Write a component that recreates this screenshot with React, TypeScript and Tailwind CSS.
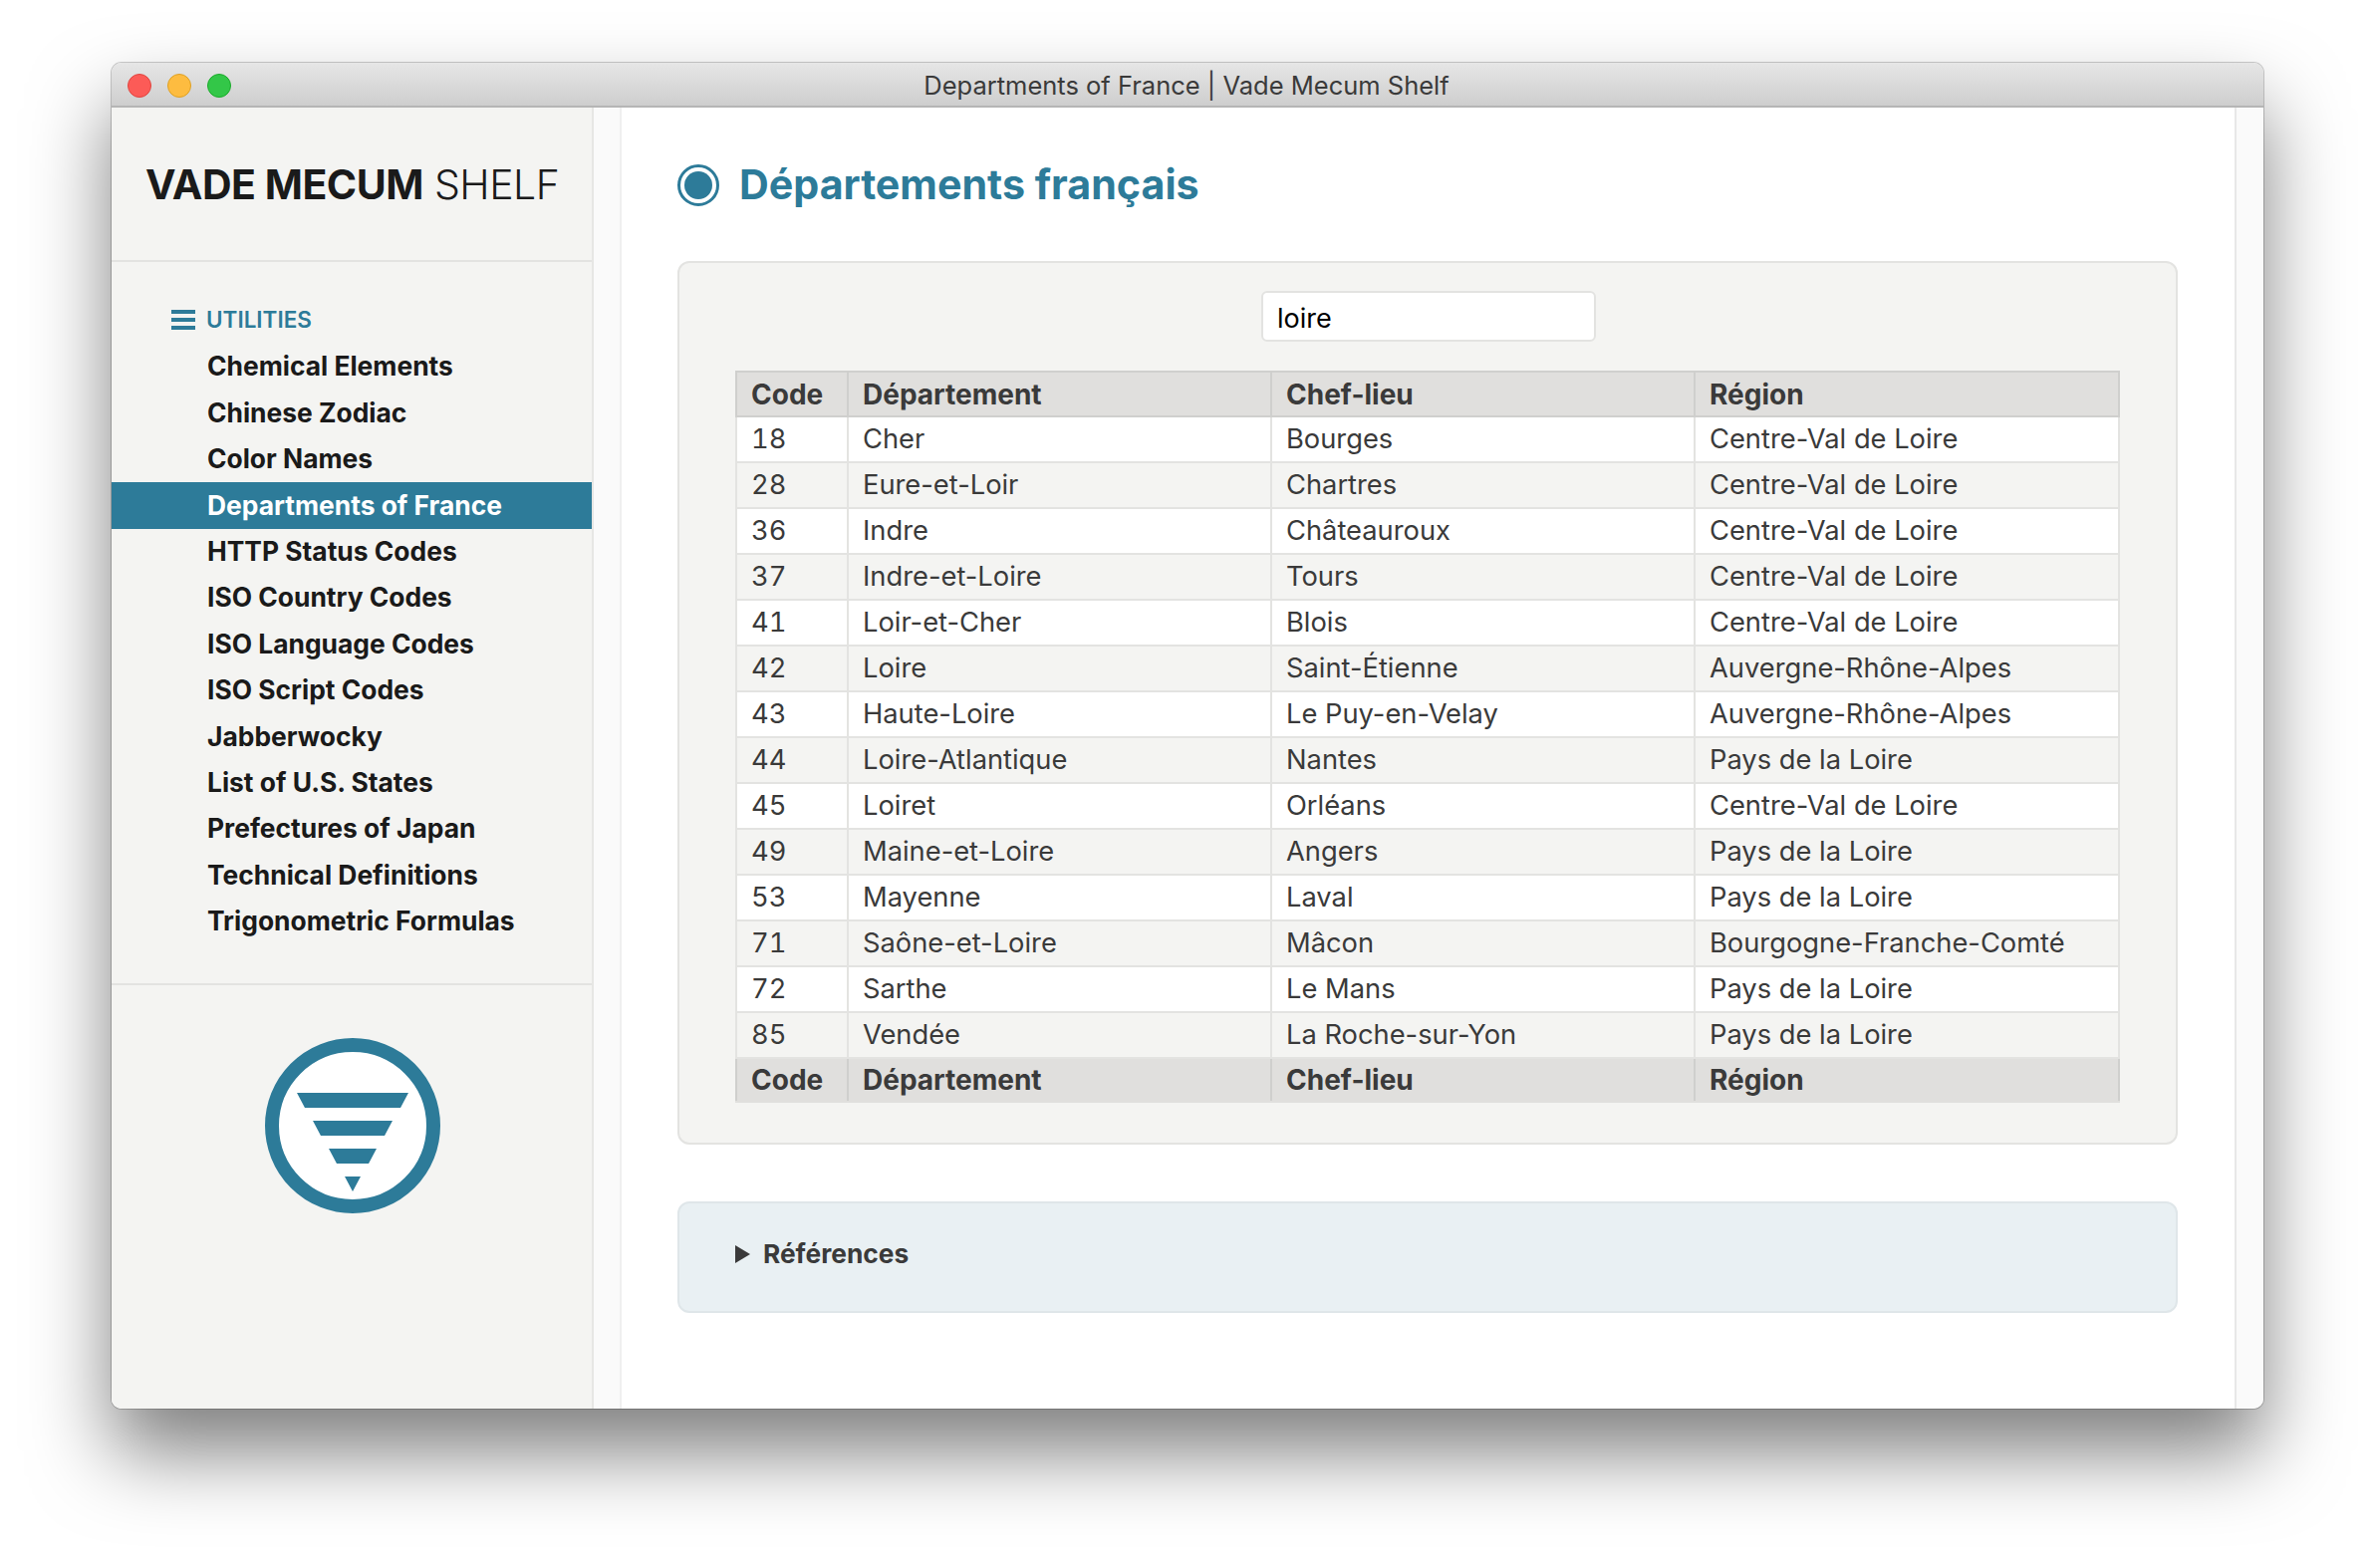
import React from 'react';

const utilities = [
  'Chemical Elements',
  'Chinese Zodiac',
  'Color Names',
  'Departments of France',
  'HTTP Status Codes',
  'ISO Country Codes',
  'ISO Language Codes',
  'ISO Script Codes',
  'Jabberwocky',
  'List of U.S. States',
  'Prefectures of Japan',
  'Technical Definitions',
  'Trigonometric Formulas',
];

const rows = [
  ['18', 'Cher', 'Bourges', 'Centre-Val de Loire'],
  ['28', 'Eure-et-Loir', 'Chartres', 'Centre-Val de Loire'],
  ['36', 'Indre', 'Châteauroux', 'Centre-Val de Loire'],
  ['37', 'Indre-et-Loire', 'Tours', 'Centre-Val de Loire'],
  ['41', 'Loir-et-Cher', 'Blois', 'Centre-Val de Loire'],
  ['42', 'Loire', 'Saint-Étienne', 'Auvergne-Rhône-Alpes'],
  ['43', 'Haute-Loire', 'Le Puy-en-Velay', 'Auvergne-Rhône-Alpes'],
  ['44', 'Loire-Atlantique', 'Nantes', 'Pays de la Loire'],
  ['45', 'Loiret', 'Orléans', 'Centre-Val de Loire'],
  ['49', 'Maine-et-Loire', 'Angers', 'Pays de la Loire'],
  ['53', 'Mayenne', 'Laval', 'Pays de la Loire'],
  ['71', 'Saône-et-Loire', 'Mâcon', 'Bourgogne-Franche-Comté'],
  ['72', 'Sarthe', 'Le Mans', 'Pays de la Loire'],
  ['85', 'Vendée', 'La Roche-sur-Yon', 'Pays de la Loire'],
];

const headers = ['Code', 'Département', 'Chef-lieu', 'Région'];

const Logo = () => (
  <svg width="176" height="176" viewBox="0 0 176 176">
    <circle cx="88" cy="88" r="81" fill="#fff" stroke="#2d7b99" strokeWidth="14" />
    <polygon points="32,55 144,55 136,70 40,70" fill="#2d7b99" />
    <polygon points="48,83 128,83 120,98 56,98" fill="#2d7b99" />
    <polygon points="64,111 112,111 104,126 72,126" fill="#2d7b99" />
    <polygon points="80,139 96,139 88,154" fill="#2d7b99" />
  </svg>
);

const HeaderRow = ({ foot }: { foot?: boolean }) => (
  <tr className={foot ? 'h-[44px] bg-[#e0dfdd] text-[28px] leading-[40px]' : 'h-[45px] bg-[#e0dfdd] text-[28px] leading-[40px]'}>
    {headers.map((h) => (
      <th
        key={h}
        className={
          foot
            ? 'border-2 border-b-[#e0dfdd] border-[#cfcfcd] px-[14px] text-left font-bold'
            : 'border-2 border-[#cfcfcd] px-[14px] text-left font-bold'
        }
      >
        {h}
      </th>
    ))}
  </tr>
);

export default function App() {
  return (
    <div className="h-[1574px] w-[2384px] overflow-hidden bg-white pl-[112px] pt-[63px] font-['Inter',sans-serif]">
      <div className="flex h-[1351px] w-[2160px] flex-col overflow-hidden rounded-[10px] shadow-[0_0_0_1px_rgba(0,0,0,0.2),0_44px_80px_rgba(0,0,0,0.5)]">
        {/* Title bar */}
        <div className="relative flex h-[45px] shrink-0 items-center justify-center border-b-2 border-[#b5b5b5] bg-gradient-to-b from-[#e6e6e6] to-[#cecece] pr-[2px] pt-[4px]">
          <div className="absolute left-[16px] top-[11px] flex gap-4">
            <span className="h-6 w-6 rounded-full border border-[#e0443e] bg-[#fc5b57]" />
            <span className="h-6 w-6 rounded-full border border-[#dea123] bg-[#fdbc40]" />
            <span className="h-6 w-6 rounded-full border border-[#1aab29] bg-[#33c748]" />
          </div>
          <span className="text-[25.5px] text-[#3a3a3a]">Departments of France | Vade Mecum Shelf</span>
        </div>

        <div className="flex min-h-0 flex-1 bg-[#fafafa]">
          {/* Sidebar */}
          <aside className="flex w-[484px] shrink-0 flex-col border-r-2 border-[#e6e6e4] bg-[#f4f4f2]">
            <div className="flex h-[155px] shrink-0 items-start border-b-2 border-[#e3e3e1] pl-[34px] pt-[52px]">
              <div className="text-[41px] leading-[50px] tracking-[-0.5px] text-[#1a1a1a]">
                <span className="font-bold">VADE MECUM</span> <span className="font-light">SHELF</span>
              </div>
            </div>
            <nav className="h-[726px] shrink-0 border-b-2 border-[#e3e3e1] pt-[34px]">
              <div className="flex h-[48px] items-center pl-[60px] text-[22.5px] font-semibold text-[#2d7b99]">
                <span className="flex h-[20px] w-[24px] flex-col justify-between">
                  <span className="h-1 bg-[#2d7b99]" />
                  <span className="h-1 bg-[#2d7b99]" />
                  <span className="h-1 bg-[#2d7b99]" />
                </span>
                <span className="ml-[11px]">UTILITIES</span>
              </div>
              {utilities.map((name) => (
                <div
                  key={name}
                  className={
                    name === 'Departments of France'
                      ? 'flex h-[46.4px] items-center bg-[#2d7b99] pl-[96px] text-[26.4px] font-bold text-white'
                      : 'flex h-[46.4px] items-center pl-[96px] text-[26.4px] font-bold text-[#1a1a1a]'
                  }
                >
                  {name}
                </div>
              ))}
            </nav>
            <div className="flex justify-center pl-[2px] pt-[53px]">
              <Logo />
            </div>
          </aside>

          {/* Main */}
          <main className="ml-[26px] flex-1 border-x-2 border-[#e8e8e8] border-l-[#efefef] bg-white pl-[56px] pr-[57px] pt-[56px]">
            <h1 className="flex h-[44px] items-center gap-[20px] text-[41.2px] font-bold text-[#2d7b99]">
              <span className="flex h-[42px] w-[42px] items-center justify-center rounded-full border-[3px] border-[#2d7b99]">
                <span className="h-[28px] w-[28px] rounded-full bg-[#2d7b99]" />
              </span>
              Départements français
            </h1>

            <section className="mt-[54px] h-[887px] rounded-[12px] border-2 border-[#e3e3e1] bg-[#f4f4f2] px-[56px] pt-[28px]">
              <div className="flex justify-center pl-[2px]">
                <input
                  readOnly
                  value="loire"
                  className="h-[51px] w-[336px] rounded-[6px] border-2 border-[#e3e3e1] bg-white px-[14px] pt-[3px] text-[27px] text-black outline-none"
                />
              </div>
              <table className="mt-[29px] w-[1390px] table-fixed border-collapse text-[27.3px] leading-[40px] text-[#3a3a3a]">
                <colgroup>
                  <col className="w-[112px]" />
                  <col className="w-[425px]" />
                  <col className="w-[425px]" />
                  <col />
                </colgroup>
                <thead>
                  <HeaderRow />
                </thead>
                <tbody>
                  {rows.map((r, i) => (
                    <tr key={r[0]} className={i % 2 === 0 ? 'h-[46px] bg-white' : 'h-[46px] bg-[#f4f4f2]'}>
                      {r.map((c, j) => (
                        <td
                          key={j}
                          className={
                            j === 0
                              ? 'border-2 border-[#e3e3e1] px-[14px] tabular-nums'
                              : 'border-2 border-[#e3e3e1] px-[14px]'
                          }
                        >
                          {c}
                        </td>
                      ))}
                    </tr>
                  ))}
                </tbody>
                <tfoot>
                  <HeaderRow foot />
                </tfoot>
              </table>
            </section>

            <section className="mt-[57px] flex h-[112px] items-start gap-[13px] rounded-[12px] border-2 border-[#dfe6e9] bg-[#e9f0f3] pl-[56px] pt-[31px] text-[26.3px] font-bold text-[#3a3a3a]">
              <span className="mt-[11px] h-0 w-0 border-y-[9px] border-l-[15px] border-y-transparent border-l-[#3a3a3a]" />
              Références
            </section>
          </main>
          <div className="w-[28px] shrink-0" />
        </div>
      </div>
    </div>
  );
}
